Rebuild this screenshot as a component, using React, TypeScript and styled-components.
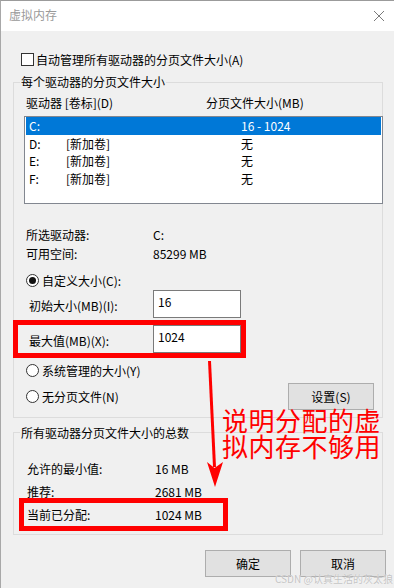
import React from "react";
import styled, { createGlobalStyle } from "styled-components";

const GlobalStyle = createGlobalStyle`
  html, body {
    margin: 0;
    padding: 0;
    background: #f0f0f0;
  }
  body {
    font-family: "Noto Sans CJK SC", "Noto Sans", sans-serif;
    font-size: 12px;
    color: #000;
  }
`;

const Window = styled.div`
  position: relative;
  width: 394px;
  height: 588px;
  box-sizing: border-box;
  border-top: 1px solid #9b9b9b;
  border-left: 1px solid #a8a8a8;
  background: #f0f0f0;
  overflow: hidden;
`;

const TitleBar = styled.div`
  height: 30px;
  box-sizing: border-box;
  padding: 0 9px 0 8px;
  background: #fff;
  display: flex;
  align-items: center;
  justify-content: space-between;
`;

const Title = styled.span`
  color: #9a9a9a;
  line-height: 16px;
  margin-top: -2px;
`;

const Body = styled.div`
  padding: 22px 11px 0 12px;
`;

const CheckRow = styled.label`
  display: flex;
  align-items: center;
  gap: 2px;
  height: 13px;
  padding-left: 8px;
`;

const CheckBox = styled.span`
  width: 13px;
  height: 13px;
  box-sizing: border-box;
  border: 1px solid #333;
  background: #fff;
`;

const Group = styled.fieldset<{ $gap?: number }>`
  margin: ${p => p.$gap ?? 0}px 0 0 0;
  padding: 5px 8px 7px 12px;
  border: 1px solid #dcdcdc;
  min-width: 0;
`;

const Legend = styled.legend`
  padding: 0 1px;
  margin-left: -6px;
  line-height: 16px;
`;

const HeaderRow = styled.div`
  display: grid;
  grid-template-columns: 180px 1fr;
  line-height: 16px;
`;

const ListBox = styled.div`
  margin: 5px 0 0 -2px;
  width: 359px;
  height: 88px;
  box-sizing: border-box;
  border: 1px solid #828790;
  background: #fff;
  padding: 0 1px;
`;

const ListRow = styled.div<{ $selected?: boolean }>`
  display: grid;
  grid-template-columns: 37px 175px 1fr;
  height: 17.5px;
  line-height: 17.5px;
  padding-left: 3px;
  background: ${p => (p.$selected ? "#0078d7" : "transparent")};
  color: ${p => (p.$selected ? "#fff" : "#000")};
`;

const InfoGrid = styled.div`
  margin-top: 21px;
  display: grid;
  grid-template-columns: 127px 1fr;
  grid-auto-rows: 19px;
  align-items: center;
`;

const RadioRow = styled.div<{ $gap?: number }>`
  display: flex;
  align-items: center;
  gap: 3px;
  height: 19px;
  margin-top: ${p => p.$gap ?? 0}px;
`;

const Radio = styled.span<{ $checked?: boolean }>`
  position: relative;
  width: 13px;
  height: 13px;
  box-sizing: border-box;
  border: 1px solid #333;
  border-radius: 50%;
  background: #fff;

  &::after {
    content: "";
    display: ${p => (p.$checked ? "block" : "none")};
    position: absolute;
    left: 2px;
    top: 2px;
    width: 7px;
    height: 7px;
    border-radius: 50%;
    background: #111;
  }
`;

const SizeRow = styled.div<{ $gap?: number; $marked?: boolean }>`
  display: grid;
  grid-template-columns: 135px 88px;
  align-items: center;
  width: 223px;
  margin: ${p => p.$gap ?? 0}px 0 0 -8px;
  outline: ${p => (p.$marked ? "5px solid #f00" : "none")};
`;

const SizeLabel = styled.span`
  padding: 2px 0 0 11px;
`;

const EditBox = styled.div`
  height: 28px;
  box-sizing: border-box;
  border: 1px solid #7a7a7a;
  background: #fff;
  padding: 3px 4px 0;
  line-height: 16px;
`;

const SplitRow = styled.div`
  display: flex;
  align-items: center;
  justify-content: space-between;
  margin-top: 2.5px;
`;

const Button = styled.button`
  width: 86px;
  height: 27px;
  box-sizing: border-box;
  border: 1px solid #adadad;
  background: #e1e1e1;
  font: inherit;
  color: #000;
  padding: 0;
`;

const TotalRow = styled.div<{ $marked?: boolean }>`
  display: grid;
  grid-template-columns: 128px 1fr;
  align-items: center;
  width: 199px;
  height: 23px;
  box-sizing: border-box;
  padding-left: 3px;
  margin-left: -2px;
  outline: ${p => (p.$marked ? "5px solid #f00" : "none")};
`;

const TotalList = styled.div`
  padding-top: 11.5px;
  padding-bottom: 0.5px;
`;

const Footer = styled.div`
  display: flex;
  justify-content: flex-end;
  gap: 9px;
  margin: 15px -3px 0 0;
`;

const Note = styled.div`
  position: absolute;
  left: 221px;
  top: 405.5px;
  color: #f00;
  font-size: 26px;
  line-height: 26.5px;
  letter-spacing: 0.5px;
  white-space: nowrap;
`;

const Arrow = styled.svg`
  position: absolute;
  left: 199px;
  top: 354px;
`;

const Watermark = styled.div`
  position: absolute;
  left: 274px;
  top: 571px;
  font-size: 10px;
  line-height: 13px;
  color: #c4c4c4;
  text-shadow: 0 0 1px #fff;
  white-space: nowrap;
`;

const drives = [
  { letter: "C:", label: "", size: "16 - 1024", selected: true },
  { letter: "D:", label: "[新加卷]", size: "无" },
  { letter: "E:", label: "[新加卷]", size: "无" },
  { letter: "F:", label: "[新加卷]", size: "无" },
];

const CloseIcon = () => (
  <svg width="12" height="12" viewBox="0 0 12 12">
    <path d="M1 1 L11 11 M11 1 L1 11" stroke="#7a7a7a" strokeWidth="1" fill="none" />
  </svg>
);

const App: React.FC = () => {
  return (
    <Window>
      <GlobalStyle />
      <TitleBar>
        <Title>虚拟内存</Title>
        <CloseIcon />
      </TitleBar>
      <Body>
        <CheckRow>
          <CheckBox />
          <span>自动管理所有驱动器的分页文件大小(A)</span>
        </CheckRow>

        <Group $gap={8}>
          <Legend>每个驱动器的分页文件大小</Legend>
          <HeaderRow>
            <span>驱动器 [卷标](D)</span>
            <span>分页文件大小(MB)</span>
          </HeaderRow>
          <ListBox>
            {drives.map(d => (
              <ListRow key={d.letter} $selected={d.selected}>
                <span>{d.letter}</span>
                <span>{d.label}</span>
                <span>{d.size}</span>
              </ListRow>
            ))}
          </ListBox>

          <InfoGrid>
            <span>所选驱动器:</span>
            <span>C:</span>
            <span>可用空间:</span>
            <span>85299 MB</span>
          </InfoGrid>

          <RadioRow $gap={8}>
            <Radio $checked />
            <span>自定义大小(C):</span>
          </RadioRow>
          <SizeRow>
            <SizeLabel>初始大小(MB)(I):</SizeLabel>
            <EditBox>16</EditBox>
          </SizeRow>
          <SizeRow $gap={7} $marked>
            <SizeLabel>最大值(MB)(X):</SizeLabel>
            <EditBox>1024</EditBox>
          </SizeRow>

          <RadioRow $gap={8}>
            <Radio />
            <span>系统管理的大小(Y)</span>
          </RadioRow>
          <SplitRow>
            <RadioRow>
              <Radio />
              <span>无分页文件(N)</span>
            </RadioRow>
            <Button>设置(S)</Button>
          </SplitRow>
        </Group>

        <Group $gap={7}>
          <Legend>所有驱动器分页文件大小的总数</Legend>
          <TotalList>
            <TotalRow>
              <span>允许的最小值:</span>
              <span>16 MB</span>
            </TotalRow>
            <TotalRow>
              <span>推荐:</span>
              <span>2681 MB</span>
            </TotalRow>
            <TotalRow $marked>
              <span>当前已分配:</span>
              <span>1024 MB</span>
            </TotalRow>
          </TotalList>
        </Group>

        <Footer>
          <Button>确定</Button>
          <Button>取消</Button>
        </Footer>
      </Body>

      <Arrow width="30" height="135" viewBox="0 0 30 135">
        <path d="M9.5 6 L14.5 112" stroke="#f00" strokeWidth="3" fill="none" />
        <polygon points="15,132 7,107 14.5,113 23,107" fill="#f00" />
      </Arrow>
      <Note>
        说明分配的虚
        <br />
        拟内存不够用
      </Note>
      <Watermark>CSDN @认真生活的灰太狼</Watermark>
    </Window>
  );
};

export default App;
